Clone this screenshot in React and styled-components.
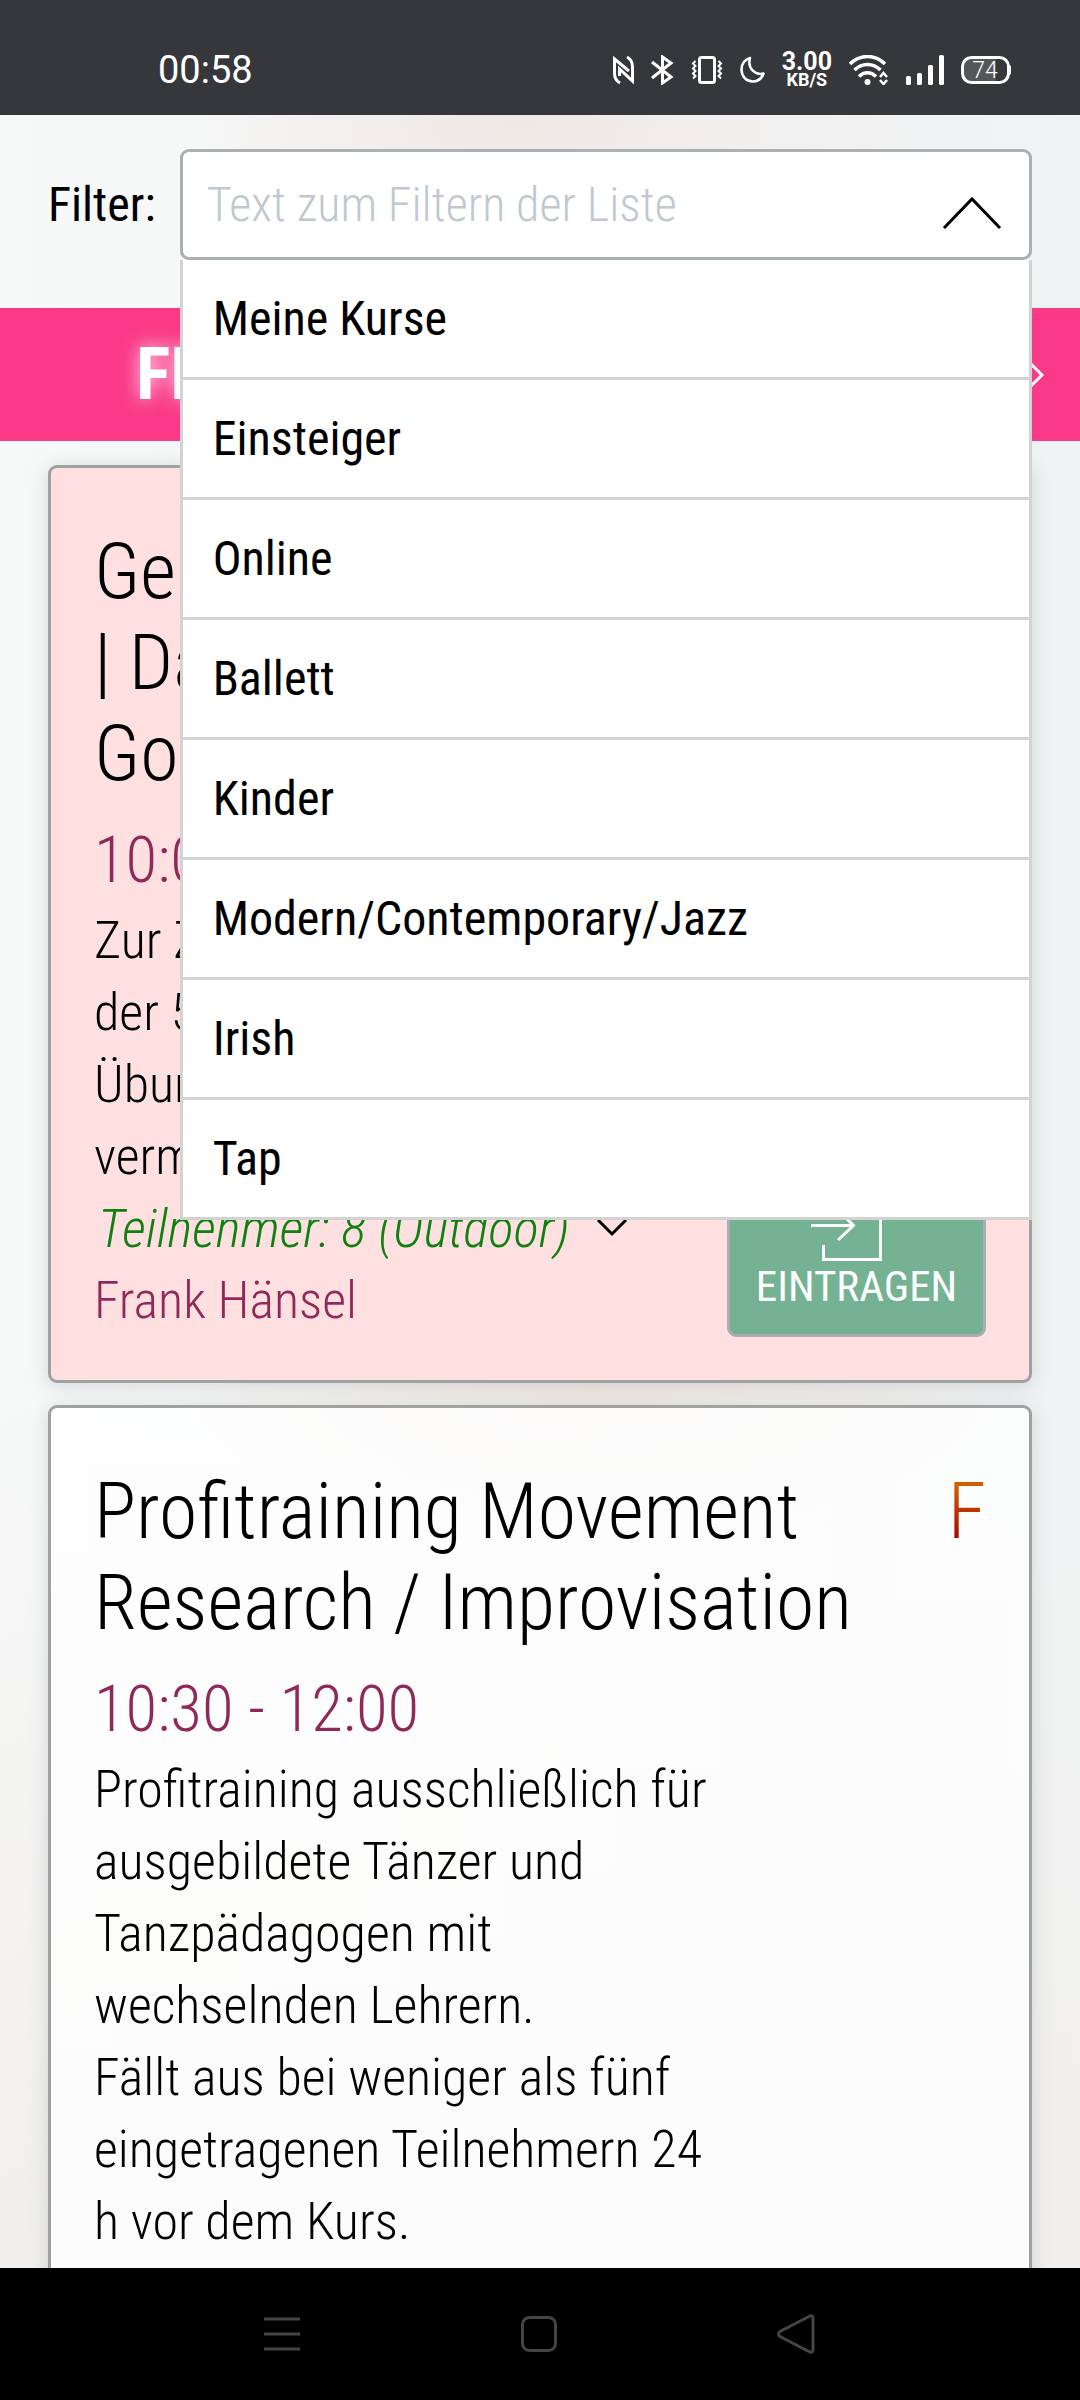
import React from "react";
import styled, { createGlobalStyle, css } from "styled-components";

const GlobalStyle = createGlobalStyle`
  * {
    box-sizing: border-box;
  }

  body {
    margin: 0;
    font-family: "Roboto Condensed", Roboto, sans-serif;
    font-weight: 300;
    color: #000;
  }

  button,
  input {
    font: inherit;
  }
`;

const Screen = styled.div`
  display: flex;
  flex-direction: column;
  height: 100vh;
  overflow: hidden;
`;

const StatusBar = styled.div`
  display: flex;
  flex-shrink: 0;
  align-items: center;
  justify-content: space-between;
  height: 115px;
  padding: 24px 69px 0 158px;
  background: #36373b;
  color: #fff;
  font-family: Roboto, sans-serif;
`;

const Clock = styled.span`
  font-size: 38px;
  font-weight: 400;
`;

const StatusIcons = styled.div`
  display: flex;
  align-items: center;
  gap: 17px;

  svg {
    display: block;
  }
`;

const NetSpeed = styled.div`
  display: flex;
  flex-direction: column;
  align-items: center;
  font-size: 25px;
  font-weight: 700;
  line-height: 20px;

  small {
    font-size: 18px;
    line-height: 16px;
  }
`;

const Content = styled.main`
  flex: 1;
  min-height: 0;
  overflow: hidden;
  background:
    radial-gradient(ellipse 320px 200px at 48% 0, #efe8e3, transparent),
    radial-gradient(ellipse 420px 160px at 55% 59%, #f0e8e2, transparent),
    linear-gradient(transparent 60%, #f1efed),
    linear-gradient(90deg, #f7f8f8 0%, #f5f6f6 30%, #f1f1f2 80%, #f0f3f4 100%);
`;

const FilterBar = styled.div`
  display: flex;
  align-items: center;
  gap: 24px;
  padding: 34px 48px 48px;
`;

const FilterLabel = styled.label`
  font-size: 48px;
  font-weight: 400;
`;

const Combo = styled.div`
  position: relative;
  flex: 1;
`;

const FilterInput = styled.input`
  display: block;
  width: 100%;
  height: 111px;
  padding: 0 96px 0 24px;
  border: 3px solid #abb0b3;
  border-radius: 9px;
  background: #fff;
  font-size: 48px;
  outline: none;

  &::placeholder {
    color: #c0c8d2;
    opacity: 1;
  }
`;

const ToggleButton = styled.button`
  position: absolute;
  top: 0;
  right: 0;
  height: 100%;
  padding: 16px 30px 0;
  border: 0;
  background: none;

  svg {
    display: block;
  }
`;

const Options = styled.ul`
  position: absolute;
  top: 100%;
  left: 0;
  right: 0;
  z-index: 2;
  margin: 0;
  padding: 0;
  list-style: none;
  border: solid #d3d3d3;
  border-width: 0 3px;
  background: #fff;
`;

const Option = styled.button`
  display: block;
  width: 100%;
  height: 120px;
  padding: 0 30px;
  border: 0;
  border-bottom: 3px solid #d3d3d3;
  background: #fff;
  color: #000;
  font-size: 48px;
  font-weight: 400;
  text-align: left;
`;

const DayBanner = styled.div`
  display: flex;
  align-items: center;
  justify-content: space-between;
  height: 133px;
  padding: 0 36px 0 136px;
  background: #fa3a88;
  color: #fff;
`;

const DayName = styled.h1`
  margin: 0;
  font-size: 72px;
  font-weight: 700;
  line-height: 96px;
  text-shadow: 0 0 18px rgba(255, 255, 255, 0.8);
`;

const DayButton = styled.button`
  display: flex;
  padding: 0;
  border: 0;
  background: none;
`;

const CourseList = styled.div`
  display: flex;
  flex-direction: column;
  gap: 22px;
  padding: 24px 48px;
`;

const Card = styled.article`
  padding: 43px;
  border: 3px solid #9fa2a1;
  border-radius: 9px;
  background: rgba(255, 255, 255, 0.8);
  box-shadow: 0 3px 18px rgba(110, 130, 130, 0.25);

  ${(props) =>
    props.$highlight &&
    css`
      background: #fee0e0;
    `}
`;

const CardHead = styled.div`
  display: flex;
  justify-content: space-between;
  padding: 15px 0 17px;
  font-size: 78px;
  line-height: 91px;
`;

const Title = styled.h2`
  margin: 0;
  font-size: inherit;
  font-weight: inherit;
`;

const Level = styled.span`
  align-self: flex-start;
  background: linear-gradient(#d06000 20%, #a80800 80%);
  -webkit-background-clip: text;
  background-clip: text;
  color: transparent;
`;

const Time = styled.div`
  color: #90285a;
  font-size: 65px;
  line-height: 89px;
`;

const CardBody = styled.div`
  display: grid;
  grid-template-columns: 1fr 259px;
  align-items: end;
  font-size: 52px;
  line-height: 72px;
`;

const Description = styled.p`
  margin: 0;
  white-space: pre-line;
`;

const Participants = styled.div`
  display: flex;
  align-items: center;
  gap: 26px;
  padding-left: 4px;
  color: #108010;
  font-size: 53px;
  font-style: italic;
`;

const Teacher = styled.div`
  color: #90285a;
`;

const JoinButton = styled.button`
  display: flex;
  flex-direction: column;
  align-items: center;
  padding: 23px 0;
  border: 3px solid #a9adb0;
  border-radius: 9px;
  background: #75b293;
  color: #fff;
  font-size: 43px;
  font-weight: 400;
  line-height: 49px;
  text-transform: uppercase;
`;

const NavBar = styled.nav`
  display: flex;
  flex-shrink: 0;
  align-items: center;
  justify-content: space-around;
  height: 132px;
  padding: 0 153px;
  background: #000;
`;

const NavButton = styled.button`
  display: flex;
  padding: 0;
  border: 0;
  background: none;
`;

const filters = [
  "Meine Kurse",
  "Einsteiger",
  "Online",
  "Ballett",
  "Kinder",
  "Modern/Contemporary/Jazz",
  "Irish",
  "Tap",
];

const courses = [
  {
    title: ["Gemein", "| Dance", "Gold"],
    time: "10:00 - 10:30",
    text: "Zur Zeit\nder 50\nÜbungen\nvermittelt",
    participants: "Teilnehmer: 8 (Outdoor)",
    teacher: "Frank Hänsel",
    highlight: true,
  },
  {
    title: ["Profitraining Movement", "Research / Improvisation"],
    level: "F",
    time: "10:30 - 12:00",
    text: "Profitraining ausschließlich für ausgebildete Tänzer und Tanzpädagogen mit wechselnden Lehrern.\nFällt aus bei weniger als fünf eingetragenen Teilnehmern 24 h vor dem Kurs.",
  },
];

const NfcIcon = () => (
  <svg width="21" height="30" viewBox="0 0 21 30" fill="none" stroke="#fff" strokeWidth="3">
    <path d="M7 28C3 26 1.500 23 1.500 18V4L16 16M14 2C18 4 19.500 7 19.500 12V26L6.500 14V21" />
  </svg>
);

const BluetoothIcon = () => (
  <svg width="23" height="30" viewBox="0 0 23 30" fill="none" stroke="#fff" strokeWidth="3">
    <path d="M1 7L20 22L11.500 28V2L20 8L1 23" />
  </svg>
);

const VibrateIcon = () => (
  <svg width="32" height="30" viewBox="0 0 32 30" fill="none" stroke="#fff">
    <rect x="8.500" y="2.500" width="15" height="25" rx="2" strokeWidth="3" />
    <path
      d="M4.500 6L2 8.500L4.500 11L2 13.500L4.500 16L2 18.500L4.500 21L2 23.500M27.500 6L30 8.500L27.500 11L30 13.500L27.500 16L30 18.500L27.500 21L30 23.500"
      strokeWidth="2"
    />
  </svg>
);

const MoonIcon = () => (
  <svg width="25" height="30" viewBox="0 0 25 30" fill="none" stroke="#fff" strokeWidth="2.500">
    <path
      d="M10 3C4 5 1.500 9.500 1.500 14.500C1.500 21.500 6.500 26.500 12.500 26.500C18 26.500 22 23 23.500 18.500C16 20.500 7 14 10 3Z"
      strokeLinejoin="round"
    />
  </svg>
);

const WifiIcon = () => (
  <svg width="40" height="30" viewBox="0 0 40 30" fill="none" stroke="#fff" strokeWidth="3.500">
    <path d="M1 9C11 -1 26 -1 36 9M5.500 15C13 7.500 24 7.500 31.500 15M10 21.500C15 16.500 22 16.500 27 21.500" />
    <circle cx="18.500" cy="27" r="3" fill="#fff" stroke="none" />
    <path d="M31 22L34.500 18L38 22M31 25L34.500 29L38 25" strokeWidth="2.500" />
  </svg>
);

const SignalIcon = () => (
  <svg width="38" height="30" viewBox="0 0 38 30" fill="#fff">
    <rect x="0" y="21" width="5" height="9" rx="1.500" />
    <rect x="11" y="18" width="5" height="12" rx="1.500" />
    <rect x="22" y="10" width="5" height="20" rx="1.500" />
    <rect x="33" y="0" width="5" height="30" rx="1.500" />
  </svg>
);

const BatteryIcon = () => (
  <svg width="50" height="30" viewBox="0 0 50 30">
    <path d="M10 4H35V26H10C5 26 3 23 3 20V10C3 7 5 4 10 4Z" fill="#55565a" />
    <rect x="1.500" y="2.500" width="46" height="25" rx="9" fill="none" stroke="#fff" strokeWidth="3" />
    <path d="M47 10H48Q50 10 50 12V18Q50 20 48 20H47Z" fill="#fff" />
    <text x="24" y="23" fill="#fff" fontSize="23" textAnchor="middle">
      74
    </text>
  </svg>
);

const JoinIcon = () => (
  <svg width="92" height="72" viewBox="0 0 92 72" fill="none" stroke="#fff" strokeWidth="3">
    <path d="M12.500 18V2.500H69.500V69.500H12.500V55M0 35.500H43M27 20L42.500 35.500L27 50" />
  </svg>
);

const App = () => {
  return (
    <>
      <GlobalStyle />
      <Screen>
        <StatusBar>
          <Clock>00:58</Clock>
          <StatusIcons>
            <NfcIcon />
            <BluetoothIcon />
            <VibrateIcon />
            <MoonIcon />
            <NetSpeed>
              3.00
              <small>KB/S</small>
            </NetSpeed>
            <WifiIcon />
            <SignalIcon />
            <BatteryIcon />
          </StatusIcons>
        </StatusBar>

        <Content>
          <FilterBar>
            <FilterLabel htmlFor="filter">Filter:</FilterLabel>
            <Combo>
              <FilterInput id="filter" type="text" placeholder="Text zum Filtern der Liste" />
              <ToggleButton type="button" aria-label="Filter schließen">
                <svg width="60" height="36" viewBox="0 0 60 36" fill="none" stroke="#000" strokeWidth="3">
                  <path d="M2 33L30 4L58 33" />
                </svg>
              </ToggleButton>
              <Options>
                {filters.map((name) => (
                  <li key={name}>
                    <Option type="button">{name}</Option>
                  </li>
                ))}
              </Options>
            </Combo>
          </FilterBar>

          <DayBanner>
            <DayName>FREITAG</DayName>
            <DayButton type="button" aria-label="Nächster Tag">
              <svg width="24" height="42" viewBox="0 0 24 42" fill="none" stroke="#fff" strokeWidth="3">
                <path d="M3 2L22 21L3 40" />
              </svg>
            </DayButton>
          </DayBanner>

          <CourseList>
            {courses.map((course) => (
              <Card key={course.time} $highlight={course.highlight}>
                <CardHead>
                  <Title>
                    {course.title.map((line) => (
                      <div key={line}>{line}</div>
                    ))}
                  </Title>
                  {course.level && <Level>{course.level}</Level>}
                </CardHead>
                <Time>{course.time}</Time>
                <CardBody>
                  <div>
                    <Description>{course.text}</Description>
                    {course.participants && (
                      <Participants>
                        {course.participants}
                        <svg width="32" height="20" viewBox="0 0 32 20" fill="none" stroke="#000" strokeWidth="3">
                          <path d="M2 1L16 15L30 1" />
                        </svg>
                      </Participants>
                    )}
                    {course.teacher && <Teacher>{course.teacher}</Teacher>}
                  </div>
                  {course.highlight && (
                    <JoinButton type="button">
                      <JoinIcon />
                      Eintragen
                    </JoinButton>
                  )}
                </CardBody>
              </Card>
            ))}
          </CourseList>
        </Content>

        <NavBar>
          <NavButton type="button" aria-label="Menü">
            <svg width="38" height="40" viewBox="0 0 38 40" stroke="#444" strokeWidth="3">
              <path d="M1 5H37M1 20H37M1 35H37" />
            </svg>
          </NavButton>
          <NavButton type="button" aria-label="Start">
            <svg width="38" height="40" viewBox="0 0 38 40" fill="none" stroke="#444" strokeWidth="3">
              <rect x="2.500" y="3.500" width="33" height="33" rx="7" />
            </svg>
          </NavButton>
          <NavButton type="button" aria-label="Zurück">
            <svg width="40" height="40" viewBox="0 0 40 40" fill="none" stroke="#444" strokeWidth="3">
              <path d="M33 2L3 17.500Q0 20 3 22.500L33 38Q36 39 36 36V4Q36 1 33 2Z" />
            </svg>
          </NavButton>
        </NavBar>
      </Screen>
    </>
  );
};

export default App;
